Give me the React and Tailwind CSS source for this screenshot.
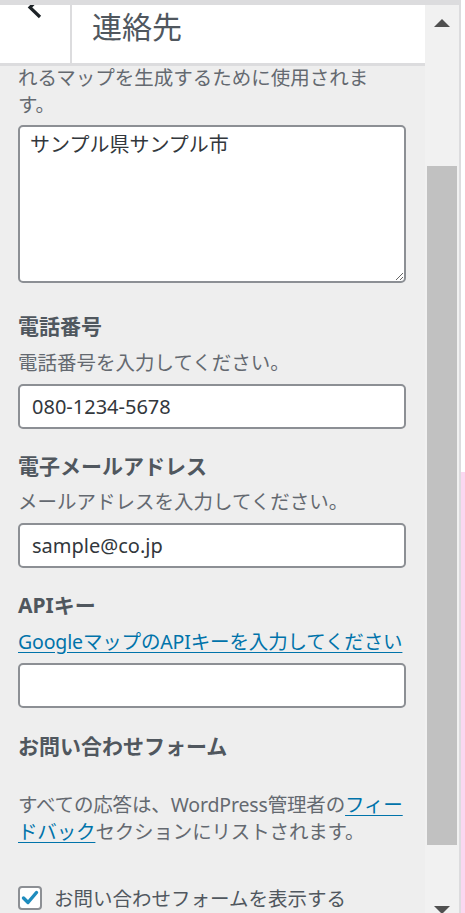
import React from "react";

const Field = ({ label, desc, link, value, first }) => (
  <div className={first ? "mt-[29px]" : "mt-[23px]"}>
    <div className="text-[21px] font-bold leading-[28px] text-[#50575e]">{label}</div>
    {link ? (
      <a className="mt-[8.5px] block whitespace-nowrap text-[19.5px] leading-[27px] tracking-[-0.15px] text-[#0073aa] underline underline-offset-[3px]">
        {desc}
      </a>
    ) : (
      <div className="mt-[8.5px] text-[19.5px] leading-[27px] text-[#646970]">{desc}</div>
    )}
    <input
      defaultValue={value}
      className="mt-[8px] block h-[45px] w-full rounded-[5px] border-2 border-[#8c8f94] bg-white pl-[12px] text-[20px] text-[#32373c] outline-none"
    />
  </div>
);

const App = () => {
  return (
    <div className="flex h-[913px] w-[465px] overflow-hidden bg-white font-['Noto_Sans','Noto_Sans_CJK_JP',sans-serif]">
      <div className="flex w-[459px] flex-col">
        {/* top strip */}
        <div className="h-[5px] shrink-0 bg-[#dcdcde]" />
        <div className="flex min-h-0 flex-1">
          {/* panel */}
          <div className="flex w-[425px] flex-col bg-[#eeeeee]">
            {/* header */}
            <div className="flex h-[61px] shrink-0 border-b-[3px] border-[#dcdcde] bg-white">
              <div className="w-[72px] shrink-0 border-r-2 border-[#dcdcde]">
                <svg width="60" height="14" viewBox="0 0 60 14" className="block">
                  <path d="M40 -8 L30 2.5 L40 12" fill="none" stroke="#1d2327" strokeWidth="3.2" />
                </svg>
              </div>
              <div className="pl-[20px] pt-[7px] text-[30px] leading-[30px] text-[#50575e]">連絡先</div>
            </div>

            {/* content */}
            <div className="flex-1 px-[18px] pr-[19px]">
              <div className="-mt-[2.5px] text-[19.5px] leading-[27px] text-[#646970]">
                れるマップを生成するために使用されま
                <br />
                す。
              </div>
              <textarea
                defaultValue="サンプル県サンプル市"
                className="mt-[7.5px] block h-[158px] w-full rounded-[5px] border-2 border-[#8c8f94] bg-white pl-[10px] pt-[5px] text-[20px] leading-[26px] text-[#32373c] outline-none"
              />

              <Field first label="電話番号" desc="電話番号を入力してください。" value="080-1234-5678" />
              <Field label="電子メールアドレス" desc="メールアドレスを入力してください。" value="sample@co.jp" />
              <Field label="APIキー" link desc="GoogleマップのAPIキーを入力してください" value="" />

              <div className="mt-[24px] text-[21px] font-bold leading-[28px] text-[#50575e]">お問い合わせフォーム</div>
              <div className="mt-[31px] whitespace-nowrap text-[19.5px] leading-[27.5px] tracking-[-0.15px] text-[#646970]">
                すべての応答は、WordPress管理者の
                <a className="text-[#0073aa] underline underline-offset-[3px]">
                  フィー
                  <br />
                  ドバック
                </a>
                セクションにリストされます。
              </div>

              <label className="mt-[39px] flex items-center gap-[12px]">
                <span className="flex h-[24px] w-[24px] items-center justify-center rounded-[4px] border-2 border-[#8c8f94] bg-white">
                  <svg width="18" height="18" viewBox="0 0 18 18">
                    <path d="M2.5 9 L7 13.5 L15.5 3.5" fill="none" stroke="#1e8cbe" strokeWidth="3.4" strokeLinecap="round" strokeLinejoin="round" />
                  </svg>
                </span>
                <span className="text-[19.5px] leading-[27px] text-[#50575e]">お問い合わせフォームを表示する</span>
              </label>
            </div>
          </div>

          {/* scrollbar */}
          <div className="flex w-[34px] flex-col bg-[#f1f1f1]">
            <svg width="16" height="8" viewBox="0 0 16 8" className="mx-auto mt-[14px] block shrink-0">
              <path d="M8 0 L16 8 L0 8 Z" fill="#505050" />
            </svg>
            <div className="mx-[2px] mt-[139px] h-[679px] shrink-0 bg-[#c1c1c1]" />
            <svg width="16" height="8" viewBox="0 0 16 8" className="mx-auto mt-[61px] block shrink-0">
              <path d="M0 0 L16 0 L8 8 Z" fill="#505050" />
            </svg>
          </div>
        </div>
      </div>
      <div className="w-[2px] bg-[#dcdcde]" />
      <div className="flex w-[4px] flex-col">
        <div className="h-[472px] bg-white" />
        <div className="flex-1 bg-[#fbd7f0]" />
      </div>
    </div>
  );
};

export default App;
